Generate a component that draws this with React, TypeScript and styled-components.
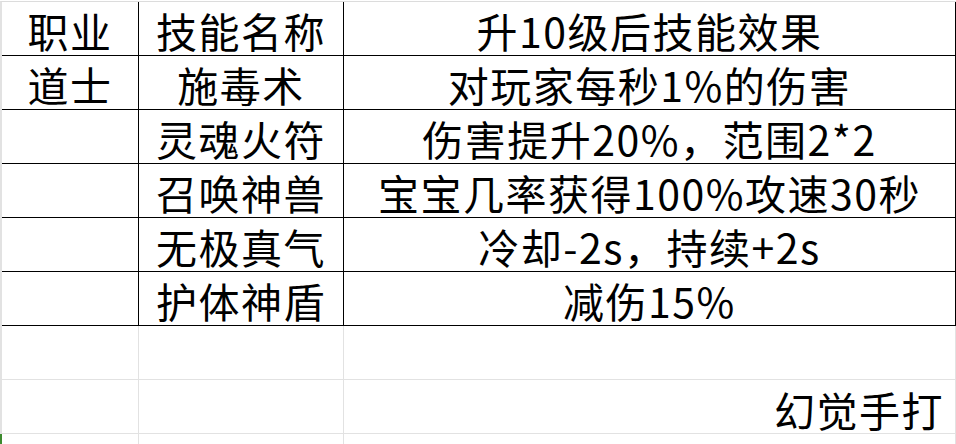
import React from "react";
import styled, { createGlobalStyle } from "styled-components";

const Global = createGlobalStyle`
  html, body { margin: 0; padding: 0; background: #ffffff; }
  body { font-family: "Noto Sans CJK SC", "Liberation Sans", sans-serif; overflow: hidden; }
`;

const Sheet = styled.div`
  width: 956px;
  height: 444px;
  box-sizing: border-box;
  padding-top: 1px;
  background: #fff;
  position: relative;
  overflow: hidden;
`;

const Grid = styled.div`
  display: grid;
  grid-template-columns: 137px 205px 1fr;
  grid-auto-rows: 54px;
  border-top: 1px solid #dcdcdc;
  border-left: 2px solid #e2e2e2;
`;

type CellProps = { $dark?: boolean; $align?: "center" | "right"; $bottom?: boolean };

const Cell = styled.div<CellProps>`
  box-sizing: border-box;
  display: flex;
  align-items: ${(p) => (p.$bottom ? "flex-end" : "center")};
  justify-content: ${(p) => (p.$align === "right" ? "flex-end" : "center")};
  padding: ${(p) => (p.$align === "right" ? "0 11px 2px 0" : "3px 0 0 0")};
  border-right: 1px solid ${(p) => (p.$dark ? "#000" : "#e2e2e2")};
  border-bottom: 1px solid ${(p) => (p.$dark ? "#000" : "#e2e2e2")};
  font-size: 41px;
  line-height: 44px;
  letter-spacing: 1.5px;
  color: #000;
  white-space: nowrap;
  overflow: visible;
`;

const Marker = styled.div`
  position: absolute;
  left: 0;
  top: 434px;
  width: 2px;
  height: 10px;
  background: #3c8a2e;
`;

const rows: [string, string, string][] = [
  ["职业", "技能名称", "升10级后技能效果"],
  ["道士", "施毒术", "对玩家每秒1%的伤害"],
  ["", "灵魂火符", "伤害提升20%，范围2*2"],
  ["", "召唤神兽", "宝宝几率获得100%攻速30秒"],
  ["", "无极真气", "冷却-2s，持续+2s"],
  ["", "护体神盾", "减伤15%"],
];

export default function App() {
  return (
    <>
      <Global />
      <Sheet>
        <Grid>
          {rows.map((r, i) => (
            <React.Fragment key={i}>
              <Cell $dark>{r[0]}</Cell>
              <Cell $dark>{r[1]}</Cell>
              <Cell $dark>{r[2]}</Cell>
            </React.Fragment>
          ))}
          <Cell />
          <Cell />
          <Cell />
          <Cell />
          <Cell />
          <Cell $align="right" $bottom>幻觉手打</Cell>
          <Cell />
          <Cell />
          <Cell />
        </Grid>
        <Marker />
      </Sheet>
    </>
  );
}
